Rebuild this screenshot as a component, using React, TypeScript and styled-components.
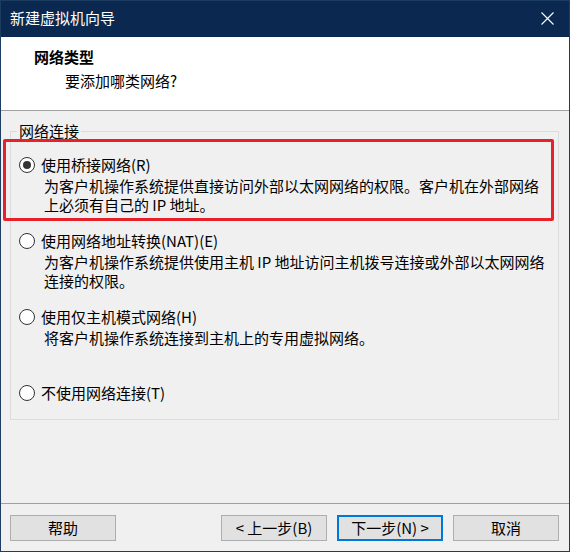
import React from "react";
import styled, { createGlobalStyle } from "styled-components";

const Global = createGlobalStyle`
  html, body { margin: 0; padding: 0; background: #ffffff; }
  body { font-family: "Noto Sans CJK SC", "Noto Sans", sans-serif; }
  * { box-sizing: border-box; }
`;

const FONT = `"Noto Sans CJK SC", "Noto Sans", sans-serif`;

const Window = styled.div`
  position: relative;
  width: 570px;
  height: 552px;
  border: 1px solid #1c3c62;
  display: flex;
  flex-direction: column;
  background: #f0f0f0;
  font-family: ${FONT};
  font-size: 15px;
  line-height: 18px;
  color: #000;
`;

const TitleBar = styled.div`
  height: 36px;
  flex: none;
  background: #0b2850;
  color: #fff;
  display: flex;
  align-items: center;
  justify-content: space-between;
  padding: 0 9px 2px 9px;
  font-size: 15px;
`;

const CloseButton = styled.span`
  display: flex;
  width: 30px;
  justify-content: center;
  margin-right: -2px;
`;

const Header = styled.div`
  height: 74px;
  flex: none;
  background: #fff;
  border-bottom: 1px solid #a0a0a0;
  padding: 11px 0 0 33px;
`;

const HeaderTitle = styled.div`
  font-weight: 700;
`;

const HeaderSub = styled.div`
  margin-top: 6px;
  padding-left: 31px;
`;

const Body = styled.div`
  flex: 1;
  padding: 11px 10px 0 9px;
`;

const GroupBox = styled.fieldset`
  margin: 0;
  height: 298px;
  border: 1px solid #dcdcdc;
  padding: 16px 0 0 6px;
`;

const Legend = styled.legend`
  padding: 0 2px;
  line-height: 18px;
`;

const Option = styled.div`
  height: 76px;
  margin-left: 2px;
`;

const OptionRow = styled.label`
  display: flex;
  align-items: center;
  gap: 6px;
  height: 18px;
`;

const Radio = styled.span<{ $checked?: boolean }>`
  position: relative;
  width: 16px;
  height: 16px;
  flex: none;
  border-radius: 50%;
  border: 1px solid #333;
  background: #fff;
  &::after {
    content: "";
    display: ${(p) => (p.$checked ? "block" : "none")};
    position: absolute;
    left: 3px;
    top: 3px;
    width: 8px;
    height: 8px;
    border-radius: 50%;
    background: #333;
  }
`;

const Description = styled.p`
  margin: 2px 0 0;
  padding-left: 25px;
  padding-right: 8px;
  line-height: 19px;
`;

const Footer = styled.div`
  height: 48px;
  flex: none;
  border-top: 1px solid #a0a0a0;
  padding: 11px 10px 0 9px;
  display: flex;
  align-items: flex-start;
`;

const Spacer = styled.div`
  flex: 1;
`;

const Button = styled.button<{ $default?: boolean }>`
  width: 106px;
  height: 26px;
  margin-left: ${(p) => (p.$default ? "10px" : "0")};
  background: #e1e1e1;
  border: ${(p) => (p.$default ? "2px solid #0078d7" : "1px solid #adadad")};
  font-family: ${FONT};
  font-size: 15px;
  line-height: 18px;
  color: #000;
  padding: 0;
  display: flex;
  align-items: center;
  justify-content: center;
`;

const CancelButton = styled(Button)`
  margin-left: 10px;
`;

const Highlight = styled.div`
  position: absolute;
  left: 2px;
  top: 138px;
  width: 551px;
  height: 82px;
  border: 3px solid #e8202a;
  border-radius: 2px;
  pointer-events: none;
`;

type Opt = { label: string; desc: string[]; checked?: boolean };

const options: Opt[] = [
  {
    label: "使用桥接网络(R)",
    desc: [
      "为客户机操作系统提供直接访问外部以太网网络的权限。客户机在外部网络",
      "上必须有自己的 IP 地址。",
    ],
    checked: true,
  },
  {
    label: "使用网络地址转换(NAT)(E)",
    desc: [
      "为客户机操作系统提供使用主机 IP 地址访问主机拨号连接或外部以太网网络",
      "连接的权限。",
    ],
  },
  {
    label: "使用仅主机模式网络(H)",
    desc: ["将客户机操作系统连接到主机上的专用虚拟网络。"],
  },
  { label: "不使用网络连接(T)", desc: [] },
];

export default function App() {
  return (
    <>
      <Global />
      <Window>
        <TitleBar>
          <span>新建虚拟机向导</span>
          <CloseButton>
            <svg width="13" height="13" viewBox="0 0 13 13">
              <path d="M0.5 0.5 L12.5 12.5 M12.5 0.5 L0.5 12.5" stroke="#fff" strokeWidth="1.1" fill="none" />
            </svg>
          </CloseButton>
        </TitleBar>
        <Header>
          <HeaderTitle>网络类型</HeaderTitle>
          <HeaderSub>要添加哪类网络?</HeaderSub>
        </Header>
        <Body>
          <GroupBox>
            <Legend>网络连接</Legend>
            {options.map((o) => (
              <Option key={o.label}>
                <OptionRow>
                  <Radio $checked={o.checked} />
                  <span>{o.label}</span>
                </OptionRow>
                {o.desc.length > 0 && (
                  <Description>
                    {o.desc.map((d, i) => (
                      <React.Fragment key={d}>
                        {i > 0 && <br />}
                        {d}
                      </React.Fragment>
                    ))}
                  </Description>
                )}
              </Option>
            ))}
          </GroupBox>
        </Body>
        <Footer>
          <Button>帮助</Button>
          <Spacer />
          <Button>&lt; 上一步(B)</Button>
          <Button $default>下一步(N) &gt;</Button>
          <CancelButton>取消</CancelButton>
        </Footer>
        <Highlight />
      </Window>
    </>
  );
}
